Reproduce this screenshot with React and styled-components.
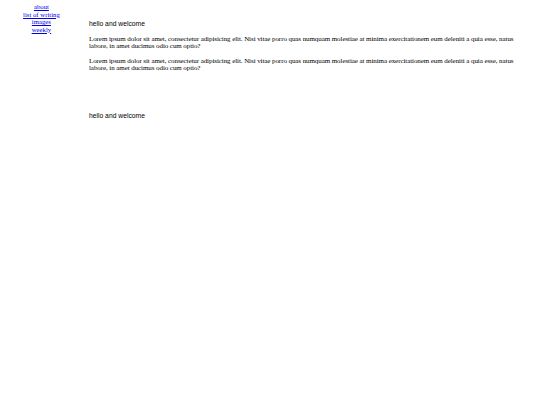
import React from "react";
import styled, { createGlobalStyle } from "styled-components";

const Global = createGlobalStyle`
  html, body { background: #fff; }
  body {
    margin: 3.4px;
    font-family: "Liberation Serif", "Times New Roman", serif;
    font-size: 6.75px;
    line-height: 1.15;
    color: #000;
  }
`;

const Layout = styled.div`
  display: flex;
  align-items: flex-start;
`;

const Nav = styled.nav`
  width: 76px;
  flex: none;
  display: flex;
  flex-direction: column;
  align-items: center;
  line-height: 7.4px;
`;

const NavLink = styled.a`
  color: #0000ee;
  text-decoration: underline;
`;

const Main = styled.main`
  flex: 1;
  min-width: 0;
  margin-left: 9.6px;
  padding-right: 8px;
`;

const Heading = styled.div`
  font-family: "Liberation Sans", Arial, sans-serif;
  font-size: 6.75px;
  margin-top: ${(p) => p.$top}px;
  margin-bottom: 8px;
`;

const Para = styled.p`
  font-size: 7px;
  letter-spacing: -0.08px;
  line-height: 7.5px;
  margin: 7px 0;
`;

export default function App() {
  const text =
    "Lorem ipsum dolor sit amet, consectetur adipisicing elit. Nisi vitae porro quas numquam molestiae at minima exercitationem eum deleniti a quia esse, natus labore, in amet ducimus odio cum optio?";
  return (
    <>
      <Global />
      <Layout>
        <Nav>
          <NavLink href="#">about</NavLink>
          <NavLink href="#">list of writing</NavLink>
          <NavLink href="#">images</NavLink>
          <NavLink href="#">weekly</NavLink>
        </Nav>
        <Main>
          <Heading $top={16.5}>hello and welcome</Heading>
          <Para>{text}</Para>
          <Para>{text}</Para>
          <Heading $top={39}>hello and welcome</Heading>
        </Main>
      </Layout>
    </>
  );
}
